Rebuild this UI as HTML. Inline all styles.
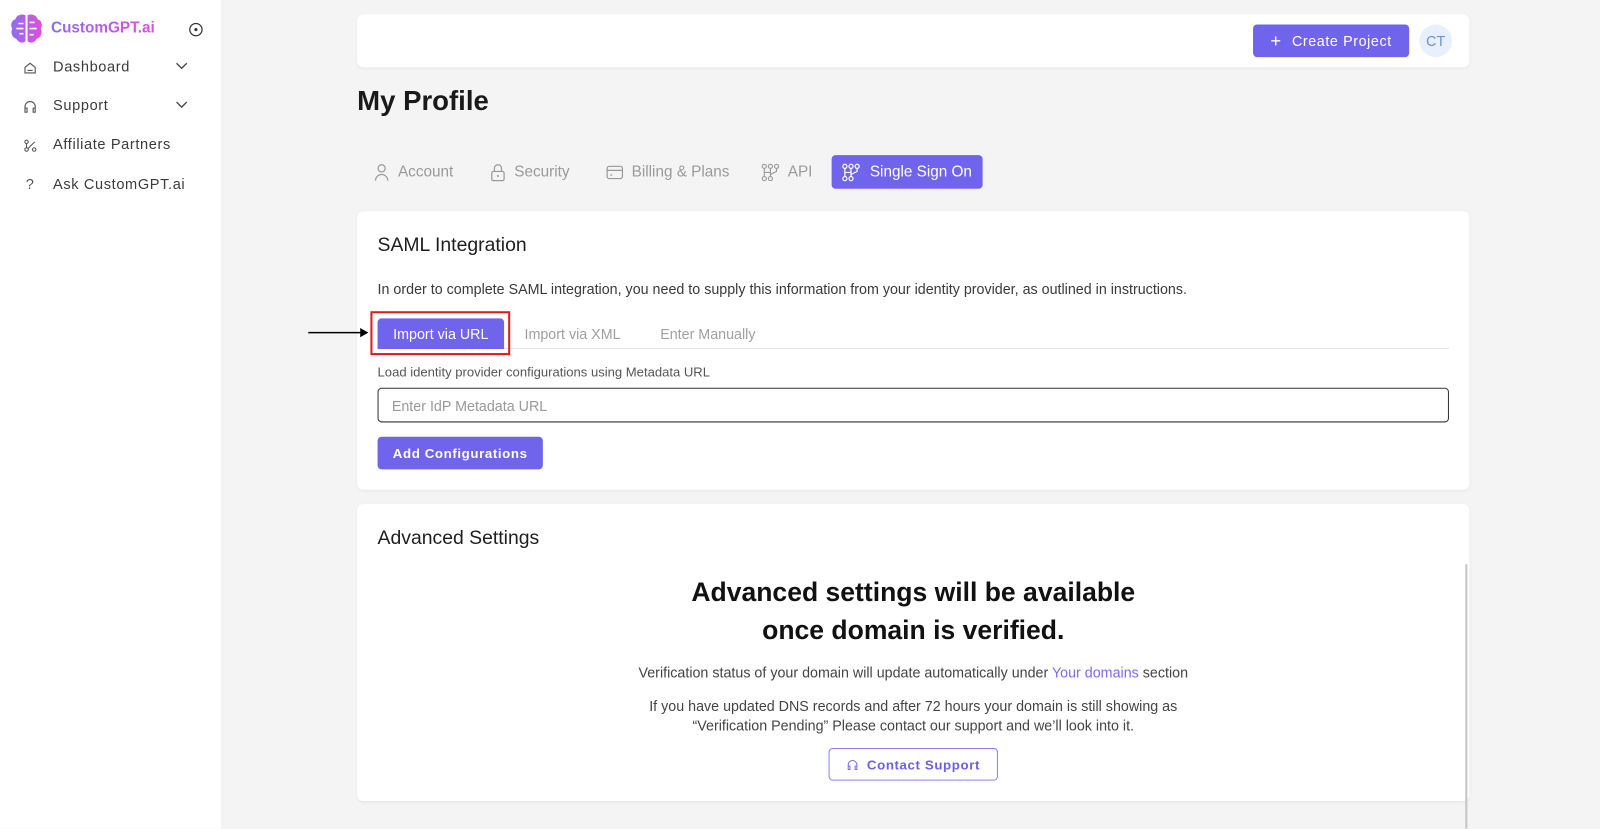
<!DOCTYPE html>
<html><head><style>
*{box-sizing:border-box;margin:0;padding:0}
body{width:1600px;height:812px;overflow:hidden;background:#f4f4f4;font-family:"Liberation Sans",sans-serif;position:relative;color:#1f1f1f}
#w{position:absolute;left:0;top:0;width:1568px;height:796px;transform:scale(1.0204);transform-origin:0 0}
.side{position:absolute;left:0;top:0;width:218px;height:812px;background:#fff;border-right:1px solid #ececec}
.nav{position:absolute;left:23px;font-size:14.3px;color:#3b3b3b;letter-spacing:.6px;display:flex;align-items:center}
.nav svg{margin-right:16px}
.card{position:absolute;left:350px;width:1090px;background:#fff;border-radius:6px;box-shadow:0 1px 3px rgba(0,0,0,.06)}
.abs{position:absolute}
.btn{position:absolute;background:#7063ec;color:#fff;border-radius:4px;display:flex;align-items:center;justify-content:center}
.tab{position:absolute;top:152px;height:33px;display:flex;align-items:center;font-size:15px;color:#9a9a9a}
.tab svg{margin-right:8px}
</style></head><body><div id="w">
<div class="side">
 <svg class="abs" style="left:10px;top:13px" width="32" height="30" viewBox="0 0 32 30"><defs><linearGradient id="g" x1="0" x2="1"><stop offset="0" stop-color="#8f6cf5"/><stop offset="1" stop-color="#e04fd8"/></linearGradient></defs><path d="M15 2C11 0 6 2 5 6 1 7 0 12 2 15 0 19 2 24 6 25 8 29 13 30 15 27ZM17 2C21 0 26 2 27 6 31 7 32 12 30 15 32 19 30 24 26 25 24 29 19 30 17 27Z" fill="url(#g)"/><path d="M8 10h5M6 15h7M9 20h4M19 9h5M19 15h7M19 21h4" stroke="#fff" stroke-width="1.5"/></svg>
 <div class="abs" style="left:50px;top:19px;font-size:15px;font-weight:bold;background:linear-gradient(90deg,#8a6cf5,#e04fd8);-webkit-background-clip:text;color:transparent">CustomGPT.ai</div>
 <svg class="abs" style="left:185px;top:22px" width="14" height="14" viewBox="0 0 14 14"><circle cx="7" cy="7" r="6" fill="none" stroke="#333" stroke-width="1.2"/><circle cx="7" cy="7" r="1.5" fill="#333"/></svg>
 <div class="nav" style="top:58px"><svg width="13" height="13" viewBox="0 0 13 13"><path d="M1.5 6L6.5 2 11.5 6V11.5H1.5Z M4 9h5" fill="none" stroke="#555" stroke-width="1.1"/></svg>Dashboard</div>
 <svg class="abs" style="left:172px;top:61px" width="12" height="8" viewBox="0 0 12 8"><path d="M1 1l5 5 5-5" fill="none" stroke="#444" stroke-width="1.3"/></svg>
 <div class="nav" style="top:96px"><svg width="13" height="13" viewBox="0 0 13 13"><path d="M1.5 9V6.5a5 5 0 0110 0V9M1.5 8h2v4h-2zM9.5 8h2v4h-2z" fill="none" stroke="#555" stroke-width="1.1"/></svg>Support</div>
 <svg class="abs" style="left:172px;top:99px" width="12" height="8" viewBox="0 0 12 8"><path d="M1 1l5 5 5-5" fill="none" stroke="#444" stroke-width="1.3"/></svg>
 <div class="nav" style="top:134px"><svg width="13" height="13" viewBox="0 0 13 13"><circle cx="3" cy="3" r="1.7" fill="none" stroke="#555"/><circle cx="3" cy="10.5" r="1.7" fill="none" stroke="#555"/><circle cx="10.5" cy="10.5" r="1.7" fill="none" stroke="#555"/><path d="M3 4.7v4M4.5 9.5L11 3" stroke="#555"/></svg>Affiliate Partners</div>
 <div class="nav" style="top:173px"><span style="width:13px;margin-right:16px;text-align:center;color:#555">?</span>Ask CustomGPT.ai</div>
</div>

<div class="card" style="top:14px;height:52px"></div>
<div class="btn" style="left:1228px;top:24px;width:153px;height:32px;font-size:14px;letter-spacing:.6px"><span style="font-size:18px;margin-right:10px;font-weight:300">+</span>Create Project</div>
<div class="abs" style="left:1391px;top:24px;width:32px;height:32px;border-radius:50%;background:#e8f0fd;color:#6f8fd8;font-size:14px;display:flex;align-items:center;justify-content:center">CT</div>

<div class="abs" style="left:350px;top:84px;font-size:27px;font-weight:600;color:#1a1a1a">My Profile</div>

<div class="tab" style="left:366px"><svg width="16" height="18" viewBox="0 0 16 18"><circle cx="8" cy="5" r="3.5" fill="none" stroke="#999" stroke-width="1.2"/><path d="M2 17a6 6 0 0112 0" fill="none" stroke="#999" stroke-width="1.2"/></svg>Account</div>
<div class="tab" style="left:480px"><svg width="16" height="18" viewBox="0 0 16 18"><rect x="2" y="8" width="12" height="9" rx="1.5" fill="none" stroke="#999" stroke-width="1.2"/><path d="M4.5 8V5a3.5 3.5 0 017 0v3" fill="none" stroke="#999" stroke-width="1.2"/><circle cx="8" cy="12.5" r="1" fill="#999"/></svg>Security</div>
<div class="tab" style="left:594px"><svg width="17" height="14" viewBox="0 0 17 14"><rect x="1" y="1" width="15" height="12" rx="2" fill="none" stroke="#999" stroke-width="1.2"/><path d="M1 5h15M4 9.5h2" stroke="#999" stroke-width="1.2"/></svg>Billing &amp; Plans</div>
<div class="tab" style="left:746px"><svg width="18" height="18" viewBox="0 0 18 18"><g fill="none" stroke="#999" stroke-width="1.1"><circle cx="3" cy="3" r="2"/><circle cx="9" cy="3" r="2"/><circle cx="15" cy="3" r="2"/><circle cx="3" cy="15" r="2"/><circle cx="9" cy="15" r="2"/><path d="M3 5v8M9 5v8M15 5v3l-6 3M3 9h6"/></g></svg>API</div>
<div class="btn" style="left:815px;top:152px;width:148px;height:33px;font-size:15px"><svg width="18" height="18" viewBox="0 0 18 18" style="margin-right:9px"><g fill="none" stroke="#fff" stroke-width="1.2"><circle cx="3" cy="3" r="2"/><circle cx="9" cy="3" r="2"/><circle cx="15" cy="3" r="2"/><circle cx="3" cy="15" r="2"/><circle cx="9" cy="15" r="2"/><path d="M3 5v8M9 5v8M15 5v3l-6 3M3 9h6"/></g></svg>Single Sign On</div>

<div class="card" style="top:207px;height:273px"></div>
<div class="abs" style="left:370px;top:230px;font-size:19px;color:#1e1e1e">SAML Integration</div>
<div class="abs" style="left:370px;top:275px;font-size:14px;color:#3a3a3a">In order to complete SAML integration, you need to supply this information from your identity provider, as outlined in instructions.</div>
<div class="abs" style="left:370px;top:341px;width:1050px;height:1px;background:#e4e4e4"></div>
<svg class="abs" style="left:302px;top:320px" width="60" height="12"><path d="M0 6h52" stroke="#000" stroke-width="1.5"/><path d="M51 1.5L59 6 51 10.5Z" fill="#000"/></svg>
<div class="abs" style="left:363px;top:305px;width:137px;height:43px;border:2px solid #e01b1b"></div>
<div class="btn" style="left:370px;top:312px;width:124px;height:30px;font-size:14px;border-radius:4px 4px 0 0">Import via URL</div>
<div class="abs" style="left:514px;top:319px;font-size:14px;color:#a0a0a0">Import via XML</div>
<div class="abs" style="left:647px;top:319px;font-size:14px;color:#a0a0a0">Enter Manually</div>
<div class="abs" style="left:370px;top:357px;font-size:12.8px;color:#555">Load identity provider configurations using Metadata URL</div>
<div class="abs" style="left:370px;top:380px;width:1050px;height:34px;border:1px solid #333;border-radius:4px;font-size:14px;color:#999;padding:9px 13px">Enter IdP Metadata URL</div>
<div class="btn" style="left:370px;top:428px;width:162px;height:32px;font-size:13px;letter-spacing:.6px;font-weight:bold">Add Configurations</div>

<div class="card" style="top:494px;height:291px"></div>
<div class="abs" style="left:370px;top:517px;font-size:19px;color:#1e1e1e">Advanced Settings</div>
<div class="abs" style="left:1436px;top:553px;width:2px;height:259px;background:#c4c4c4"></div>
<div class="abs" style="left:545px;top:562px;width:700px;text-align:center;font-size:26px;line-height:37px;font-weight:600;color:#111">Advanced settings will be available<br>once domain is verified.</div>
<div class="abs" style="left:495px;top:651px;width:800px;text-align:center;font-size:14px;color:#444">Verification status of your domain will update automatically under <span style="color:#7a6cf0">Your domains</span> section</div>
<div class="abs" style="left:495px;top:683px;width:800px;text-align:center;font-size:14px;line-height:19px;color:#444">If you have updated DNS records and after 72 hours your domain is still showing as<br>“Verification Pending” Please contact our support and we’ll look into it.</div>
<div class="abs" style="left:812px;top:733px;width:166px;height:32px;border:1px solid #8b80ee;border-radius:4px;display:flex;align-items:center;justify-content:center;color:#6d60e8;font-size:13px;letter-spacing:.6px;font-weight:bold"><svg width="11" height="11" viewBox="0 0 13 13" style="margin-right:9px"><path d="M1.5 9V6.5a5 5 0 0110 0V9M1.5 8h2v4h-2zM9.5 8h2v4h-2z" fill="none" stroke="#7a6ef0" stroke-width="1.2"/></svg>Contact Support</div>
</div></body></html>
